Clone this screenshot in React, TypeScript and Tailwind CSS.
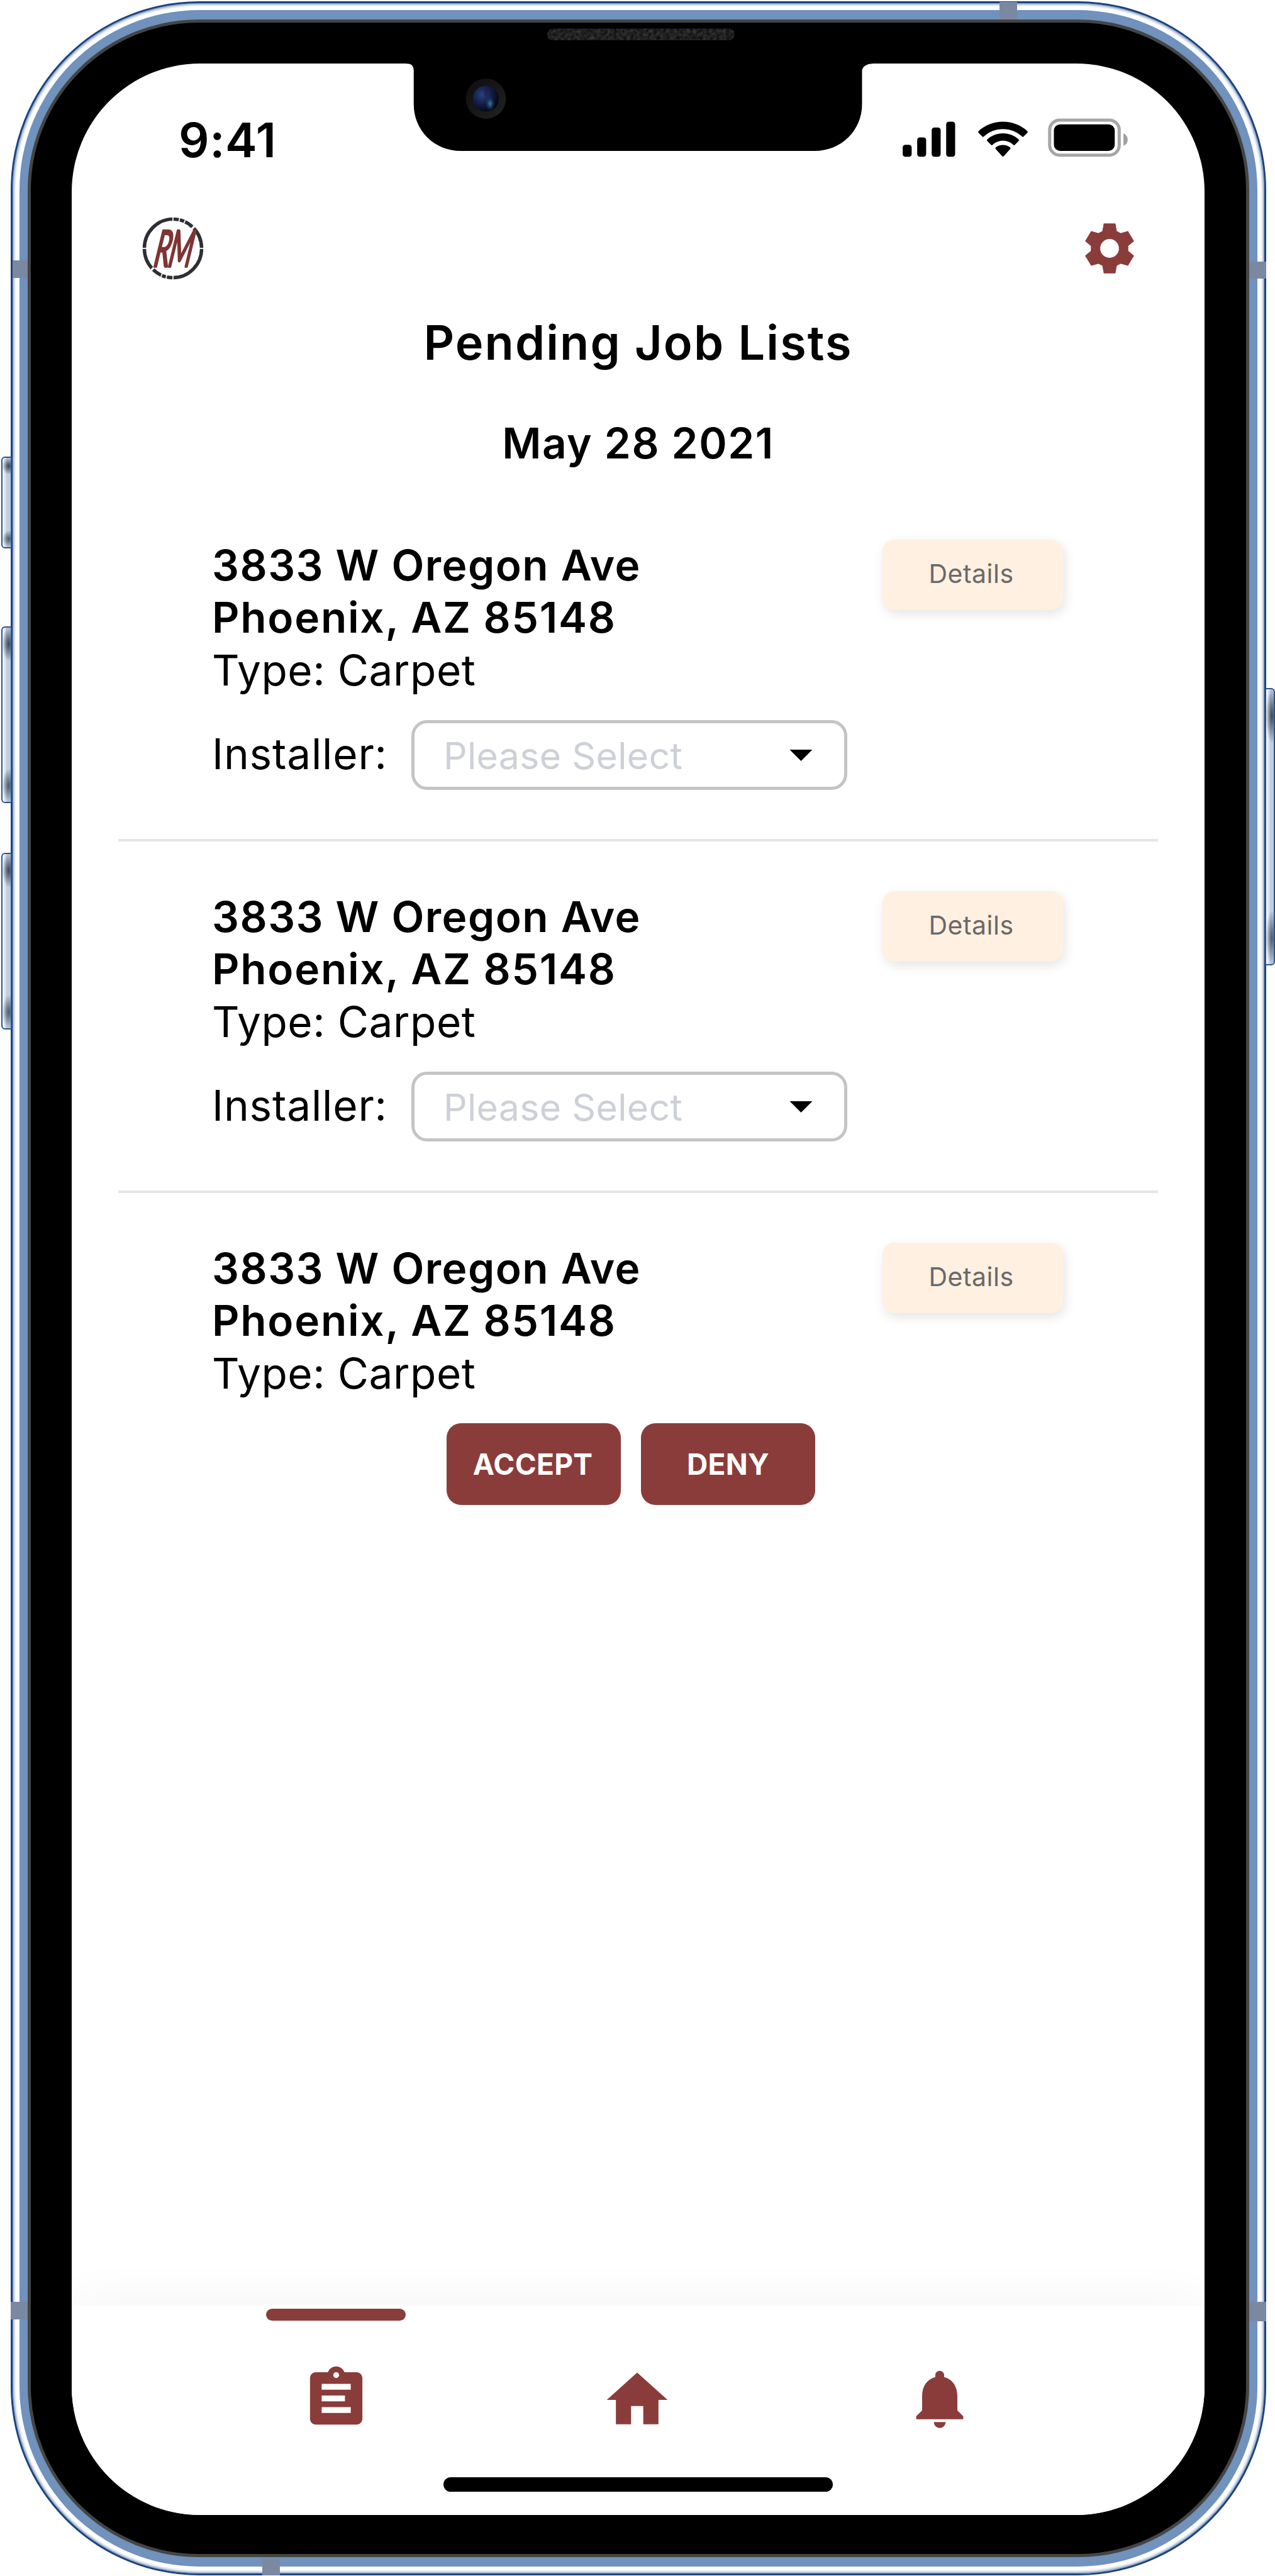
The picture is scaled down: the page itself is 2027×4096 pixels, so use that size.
import React from "react";
import { MdHome, MdNotifications } from "react-icons/md";

function SignalIcon() {
  return (
    <svg className="h-[62px] w-[84px]" viewBox="1708 224 100 74" fill="#000">
      <rect x="1708" y="274.5" width="17" height="22.5" rx="5" />
      <rect x="1735.5" y="260.4" width="17" height="36.6" rx="5" />
      <rect x="1763" y="241.6" width="17" height="55.4" rx="5" />
      <rect x="1790.5" y="230.6" width="17" height="66.4" rx="5" />
    </svg>
  );
}

function WifiIcon() {
  return (
    <svg className="h-[62px] w-[79px]" viewBox="1851 224 94 74" fill="#000">
      <path d="M1898 244.5c13.800 0 26.500 5.200 36.200 14.200.9.900 2.200.9 3.100 0l7-7c.9-1 .9-2.400 0-3.300-12.200-11.200-28.400-17.800-46.300-17.800s-34.100 6.600-46.300 17.800c-.9.900-.9 2.300 0 3.300l7 7c.9.900 2.200.9 3.100 0 9.700-9 22.400-14.200 36.200-14.200z" />
      <path d="M1898 266.800c7.500 0 14.400 2.800 19.600 7.500.9.900 2.200.8 3.100 0l7-7c1-1 .9-2.400 0-3.300-7.800-7.200-18.200-11.500-29.700-11.500s-21.900 4.300-29.700 11.500c-.9.900-1 2.300 0 3.300l7 7c.9.800 2.200.9 3.100 0 5.200-4.700 12.100-7.500 19.600-7.500z" />
      <path d="M1911.700 282.500c.9-.9.900-2.300-.1-3.200-3.600-3-8.400-4.600-13.600-4.600s-10 1.600-13.600 4.600c-1 .9-1 2.300-.1 3.200l12.100 13.400c.9 1 2.300 1 3.200 0z" />
    </svg>
  );
}

function BatteryIcon() {
  return (
    <svg className="h-[62px] w-[127px]" viewBox="1983 224 151 74">
      <rect x="1986" y="227.500" width="132" height="66.500" rx="19" fill="none" stroke="#a6a6a6" strokeWidth="6" />
      <rect x="1994" y="235.500" width="115.500" height="50.500" rx="12" fill="#000" />
      <path d="M2126 252.700c5 2 8 6.500 8 11.800s-3 9.800-8 11.700z" fill="#a0a0a0" />
    </svg>
  );
}

/* Broken ring around the brand initials */
function Logo() {
  const cuts = [0, 12.5, 23.5, 44, 90, 180, 193, 203, 225, 270];
  return (
    <svg className="h-[100px] w-[98px]" viewBox="269.500 411 117 119.500">
      <ellipse cx="328" cy="470.700" rx="54.400" ry="55.700" fill="none" stroke="#2f2e35" strokeWidth="6.500" />
      {cuts.map((a) => (
        <line
          key={a}
          x1="328"
          y1="408"
          x2="328"
          y2="424"
          stroke="#fff"
          strokeWidth={a === 44 || a === 225 ? 4 : 2}
          transform={`rotate(${a} 328 470.700)`}
        />
      ))}
      <g
        transform="translate(289.500 505) skewX(-10) scale(0.540 1)"
        fill="#7e3534"
        stroke="#7e3534"
        strokeWidth="4"
        strokeLinejoin="round"
        fontFamily="Lato, sans-serif"
        fontStyle="italic"
        fontWeight="400"
        fontSize="96"
      >
        <text x="0" y="0" letterSpacing="-5">RM</text>
      </g>
    </svg>
  );
}

function GearIcon() {
  return (
    <svg className="h-[80px] w-[78px]" viewBox="-46.500 -47.500 93 95">
      <path
        fillRule="evenodd"
        fill="#8a3c3b"
        stroke="#8a3c3b"
        strokeWidth="1.500"
        strokeLinejoin="round"
        d="M-10.500-46.500H10.500L13-32.500 21-28.200 34.500-32 45.500-14 34.700-5.200V5.200L45.500 14 34.500 32 21 28.200 13 32.500 10.500 46.500H-10.500L-13 32.500-21 28.200-34.500 32-45.500 14-34.700 5.200V-5.200L-45.500-14-34.500-32-21-28.200-13-32.500ZM18.500 0A18.500 18.500 0 1 0-18.500 0 18.500 18.500 0 1 0 18.500 0Z"
      />
    </svg>
  );
}

function ClipboardIcon() {
  return (
    <svg className="size-[111px]" viewBox="0 0 24 24" fill="#8a3c3b">
      <path d="M19 3h-4.180C14.400 1.840 13.300 1 12 1s-2.400.840-2.820 2H5c-1.100 0-2 .9-2 2v14c0 1.100.9 2 2 2h14c1.100 0 2-.9 2-2V5c0-1.100-.9-2-2-2zm-7 0c.550 0 1 .450 1 1s-.450 1-1 1-1-.450-1-1 .450-1 1-1zM7 7h10v2H7zm0 4h8v2H7zm0 4h10v2H7z" />
    </svg>
  );
}

/* Notch with earpiece grille and front camera */
function Notch() {
  return (
    <svg className="absolute left-[638px] top-[42px] h-[202px] w-[756px]" viewBox="760 50 900 240">
      <defs>
        <filter id="grain" x="0" y="0" width="1" height="1" colorInterpolationFilters="sRGB">
          <feTurbulence type="fractalNoise" baseFrequency="0.16" numOctaves="2" seed="4" />
          <feColorMatrix values="0.26 0 0 0 0  0.26 0 0 0 0  0.26 0 0 0 0  0 0 0 0 1" />
          <feComposite in2="SourceGraphic" operator="in" />
        </filter>
        <radialGradient id="lens" cx="0.350" cy="0.350" r="0.700">
          <stop offset="0" stopColor="#26437f" />
          <stop offset="0.500" stopColor="#131f48" />
          <stop offset="1" stopColor="#03060f" />
        </radialGradient>
        <radialGradient id="glint">
          <stop offset="0" stopColor="#3a7fa5" />
          <stop offset="1" stopColor="#1c3f66" stopOpacity="0" />
        </radialGradient>
        <linearGradient id="ring" x1="0" x2="1" y1="0" y2="1">
          <stop offset="0" stopColor="#0d0d0d" />
          <stop offset="1" stopColor="#222" />
        </linearGradient>
      </defs>
      <path d="M769 118V120.200H771C780 120.200 783.500 125 783.500 134V197C783.500 247 823 285.500 873 285.500H1542C1592 285.500 1632 247 1632 197V134C1632 126 1641 120.200 1652 120.200V118Z" fill="#000" />
      <rect x="1036" y="54" width="355" height="22" rx="11" fill="#202020" filter="url(#grain)" />
      <circle cx="920" cy="186.500" r="38" fill="url(#ring)" />
      <circle cx="920" cy="186.500" r="24.500" fill="url(#lens)" />
      <ellipse cx="928" cy="196" rx="9" ry="14" fill="url(#glint)" />
      <ellipse cx="920" cy="173" rx="3" ry="10" fill="#2a1d4a" opacity="0.600" />
    </svg>
  );
}

function SideButton({ className, band }: { className: string; band: string }) {
  return (
    <div className={`absolute overflow-hidden border-[2px] border-[#2d5287] bg-linear-to-r from-white to-[#bccde4] to-60% ${className}`}>
      <div className={`absolute inset-x-0 top-0 bg-radial-[ellipse_at_75%_50%] from-[#3b4657] to-transparent to-75% ${band}`} />
      <div className={`absolute inset-x-0 bottom-0 bg-radial-[ellipse_at_75%_50%] from-[#4b5a6c] to-transparent to-75% ${band}`} />
    </div>
  );
}

function Antenna({ className }: { className: string }) {
  return <div className={`absolute bg-[#7b88a2] ${className}`} />;
}

function JobCard({ action, last }: { action: "select" | "decide"; last?: boolean }) {
  return (
    <section className={`mx-[74px] h-[559px] pl-[149px] pr-[151px] pt-[78px] ${last ? "" : "border-b-[4px] border-[#e4e4e4]"}`}>
      <div className="flex items-start justify-between">
        <div className="whitespace-nowrap text-[67.500px] leading-[83.400px]">
          <p className="font-semibold tracking-[1.500px]">3833 W Oregon Ave</p>
          <p className="font-semibold tracking-[1.750px]">Phoenix, AZ 85148</p>
          <p className="tracking-[0.550px]">Type: Carpet</p>
        </div>
        <button className="mt-px h-[112px] w-[287px] rounded-[19px] bg-[#fff0e2] pb-[3px] pr-[5px] text-[41px] tracking-[0.500px] text-[#696969] shadow-[3px_6px_18px_rgba(0,0,0,0.110)]">
          Details
        </button>
      </div>
      {action === "select" ? (
        <div className="mt-[38px] flex h-[111px] items-center">
          <span className="w-[317px] whitespace-nowrap pb-[4px] text-[67.500px] tracking-[0.800px]">Installer:</span>
          <div className="flex h-full w-[693px] items-center justify-between rounded-[25px] border-[5px] border-[#c4c4c4] pl-[46px] pr-[50px]">
            <span className="whitespace-nowrap pt-[4px] text-[59px] tracking-[0.300px] text-[#cdd1d7]">Please Select</span>
            <svg className="h-[18px] w-[37px]" viewBox="0 0 44 22">
              <path d="M0 0h44L22 22z" fill="#000" />
            </svg>
          </div>
        </div>
      ) : (
        <div className="mt-[38px] flex gap-[32px] pl-[373px] text-[46px] font-bold tracking-[0.300px] text-white">
          <button className="h-[130px] w-[277px] rounded-[23px] bg-[#8a3c3b] pr-[3px]">ACCEPT</button>
          <button className="h-[130px] w-[277px] rounded-[23px] bg-[#8a3c3b]">DENY</button>
        </div>
      )}
    </section>
  );
}

export default function App() {
  return (
    <div className="relative h-[4096px] w-[2027px] overflow-hidden bg-white pl-[17px] pt-[2px] font-[Inter,'Liberation_Sans',sans-serif] text-black">
      <div className="h-[4093px] w-[1996px] rounded-[300px] border-[3px] border-[#1b437d] bg-white p-[11px] shadow-[inset_0_0_5px_1px_#3f6498]">
        <div className="h-full w-full rounded-[286px] bg-[#7092bc] px-[13px] py-[15px]">
          <div className="h-full w-full rounded-[272px] border-[5px] border-[#454545] bg-black px-[65px] pb-[64px] pt-[65px]">
            <main className="relative flex h-[3898px] w-[1801px] flex-col overflow-hidden rounded-[204px] bg-white">
              <div className="flex h-[194px] shrink-0 items-start justify-between pl-[170px] pr-[122px] pt-[81px]">
                <span className="text-[76px] font-semibold leading-[80px] tracking-[0.600px]">9:41</span>
                <div className="flex pt-[6px]">
                  <SignalIcon />
                  <div className="ml-[36px] flex gap-[32px]">
                    <WifiIcon />
                    <BatteryIcon />
                  </div>
                </div>
              </div>
              <header className="flex h-[200px] shrink-0 items-center justify-between px-[112px]">
                <Logo />
                <GearIcon />
              </header>
              <h1 className="h-[100px] shrink-0 text-center text-[75.600px] font-semibold leading-[100px] tracking-[2.100px]">Pending Job Lists</h1>
              <h2 className="mb-[32px] mt-[68px] h-[84px] shrink-0 text-center text-[67.500px] font-semibold leading-[84px] tracking-[1.500px]">May 28 2021</h2>
              <JobCard action="select" />
              <JobCard action="select" />
              <JobCard action="decide" last />
              <nav className="relative mt-auto h-[333px] shrink-0 bg-white shadow-[0_-10px_70px_rgba(0,0,0,0.045)]">
                <div className="ml-[180px] grid w-[1440px] grid-cols-3 justify-items-center pt-[5px] text-[#8a3c3b]">
                  <div className="flex flex-col items-center">
                    <div className="mb-[68px] h-[19px] w-[222px] rounded-full bg-[#8a3c3b]" />
                    <ClipboardIcon />
                  </div>
                  <MdHome className="mr-[3px] mt-[87px] size-[116px]" />
                  <MdNotifications className="mt-[87px] size-[112px]" />
                </div>
                <div className="absolute left-[591px] top-[273px] h-[23px] w-[619px] rounded-full bg-black" />
              </nav>
            </main>
          </div>
        </div>
      </div>

      <Notch />

      <Antenna className="left-[20px] top-[414px] h-[28px] w-[24px]" />
      <Antenna className="left-[17px] top-[3660px] h-[28px] w-[27px]" />
      <Antenna className="left-[1986px] top-[416px] h-[27px] w-[27px]" />
      <Antenna className="left-[1986px] top-[3660px] h-[31px] w-[27px]" />
      <Antenna className="left-[1589px] top-[3px] h-[28px] w-[28px]" />
      <Antenna className="left-[417px] top-[4068px] h-[27px] w-[28px]" />

      <SideButton className="left-[2px] top-[726px] h-[146px] w-[17px] rounded-l-[6px]" band="h-[26px]" />
      <SideButton className="left-[2px] top-[996px] h-[281px] w-[17px] rounded-l-[6px]" band="h-[52px]" />
      <SideButton className="left-[2px] top-[1356px] h-[281px] w-[17px] rounded-l-[6px]" band="h-[52px]" />
      <SideButton className="left-[2011px] top-[1094px] h-[441px] w-[16px] rounded-r-[6px]" band="h-[84px]" />
    </div>
  );
}
